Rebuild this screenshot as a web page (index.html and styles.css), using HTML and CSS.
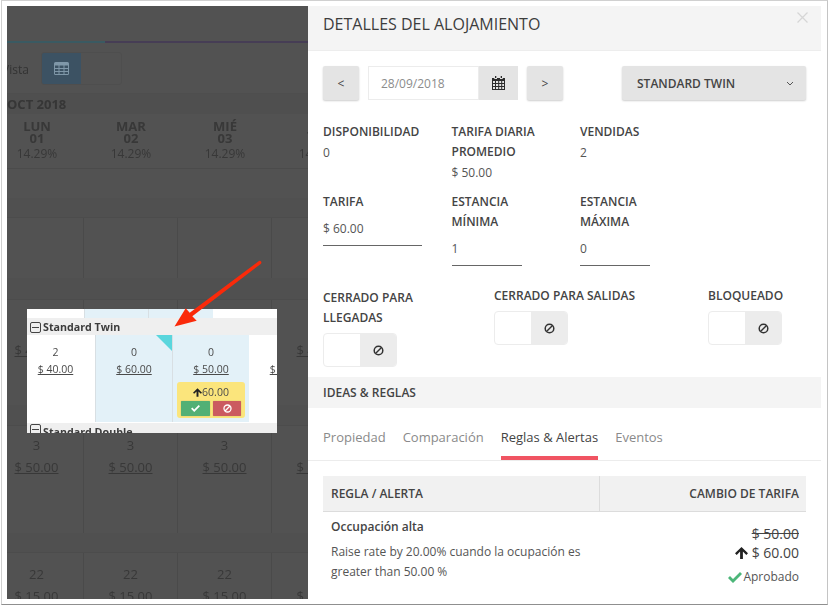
FILE: index.html
```html
<!DOCTYPE html>
<html lang="es">
<head>
<meta charset="utf-8">
<title>Detalles del alojamiento</title>
<link rel="stylesheet" href="styles.css">
</head>
<body>
<div class="frame">
  <div class="stage">
    <section class="calendar">
      <div class="cal-top"></div>
      <div class="cal-line"><i></i></div>
      <div class="cal-tools">
        <span class="vista">Vista</span>
        <div class="view-toggle">
          <span class="view-on">
            <svg width="15" height="13" viewBox="0 0 15 13"><path fill="#7f97a8" d="M1.5 0h12A1.5 1.5 0 0 1 15 1.500v10a1.500 1.500 0 0 1-1.500 1.500h-12A1.500 1.500 0 0 1 0 11.500v-10A1.500 1.500 0 0 1 1.500 0zM1 3.500V6h3.500V3.500zm4.500 0V6h4V3.500zm5 0V6H14V3.500zM1 7v2h3.500V7zm4.500 0v2h4V7zm5 0v2H14V7zM1 10v2h3.500v-2zm4.500 0v2h4v-2zm5 0v2H14v-2z"/></svg>
          </span>
          <span class="view-off"></span>
        </div>
      </div>
      <div class="cal-month">OCT 2018</div>
      <div class="cal-grid cal-head">
        <div class="day"><b>LUN<br>01</b><span>14.29%</span></div>
        <div class="day"><b>MAR<br>02</b><span>14.29%</span></div>
        <div class="day"><b>MIÉ<br>03</b><span>14.29%</span></div>
        <div class="day"><b>JUE<br>04</b><span>14.29%</span></div>
      </div>
      <div class="cal-spacer"></div>
      <div class="cal-band"></div>
      <div class="cal-grid cal-row-empty"><div class="cell"></div><div class="cell"></div><div class="cell"></div><div class="cell"></div></div>
      <div class="cal-band cal-band-tall"></div>
      <div class="cal-grid cal-row-twin">
        <div class="cell"><span>2</span><u>$ 40.00</u></div>
        <div class="cell"><span>2</span><u>$ 40.00</u></div>
        <div class="cell"><span>2</span><u>$ 40.00</u></div>
        <div class="cell"><span>2</span><u>$ 40.00</u></div>
      </div>
      <div class="cal-band cal-band-mid"></div>
      <div class="cal-grid cal-row-double">
        <div class="cell"><span>3</span><u>$ 50.00</u></div>
        <div class="cell"><span>3</span><u>$ 50.00</u></div>
        <div class="cell"><span>3</span><u>$ 50.00</u></div>
        <div class="cell"><span>3</span><u>$ 50.00</u></div>
      </div>
      <div class="cal-band"></div>
      <div class="cal-grid cal-row-last">
        <div class="cell"><span>22</span><u class="plain">$ 15.00</u></div>
        <div class="cell"><span>22</span><u class="plain">$ 15.00</u></div>
        <div class="cell"><span>22</span><u class="plain">$ 15.00</u></div>
        <div class="cell"><span>22</span><u class="plain">$ 15.00</u></div>
      </div>
    </section>

    <section class="panel">
      <header class="panel-head">
        <h1>DETALLES DEL ALOJAMIENTO</h1>
        <svg class="close" width="11" height="11" viewBox="0 0 11 11"><path d="M.5.500l10 10M10.500.500l-10 10" stroke="#d6d6d6" stroke-width="1.300" fill="none"/></svg>
      </header>
      <div class="panel-body">
        <div class="nav-row">
          <button class="btn btn-step">&lt;</button>
          <div class="date">
            <span class="date-value">28/09/2018</span>
            <span class="date-addon">
              <svg width="13" height="14" viewBox="0 0 13 14"><path fill="#2b2b2b" d="M3 0h1.300v2H3zM8.700 0H10v2H8.700zM0 2h2.300v1h2.700V2h3v1h2.700V2H13v12H0zm1 3v2h2V5zm3 0v2h2.200V5zm3.200 0v2h2V5zm3 0v2H12V5zM1 8v2h2V8zm3 0v2h2.200V8zm3.200 0v2h2V8zm3 0v2H12V8zM1 11v2h2v-2zm3 0v2h2.200v-2zm3.200 0v2h2v-2zm3 0v2H12v-2z"/></svg>
            </span>
          </div>
          <button class="btn btn-step">&gt;</button>
          <button class="btn btn-select">
            <span>STANDARD TWIN</span>
            <svg width="8" height="5" viewBox="0 0 8 5"><path d="M1 1l3 3 3-3" stroke="#555" stroke-width="1" fill="none"/></svg>
          </button>
        </div>

        <div class="stats">
          <div><h3>DISPONIBILIDAD</h3><p>0</p></div>
          <div><h3>TARIFA DIARIA PROMEDIO</h3><p>$ 50.00</p></div>
          <div><h3>VENDIDAS</h3><p>2</p></div>
        </div>

        <div class="inputs">
          <div class="input-wide"><h3>TARIFA</h3><div class="input-value">$ 60.00</div></div>
          <div class="input-narrow"><h3>ESTANCIA MÍNIMA</h3><div class="input-value">1</div></div>
          <div class="input-narrow"><h3>ESTANCIA MÁXIMA</h3><div class="input-value">0</div></div>
        </div>

        <div class="switches">
          <div class="switch-col switch-first">
            <h3>CERRADO PARA LLEGADAS</h3>
            <div class="switch"><span></span><span class="switch-off"><svg width="11" height="11" viewBox="0 0 11 11"><circle cx="5.500" cy="5.500" r="4.300" stroke="#333" stroke-width="1.500" fill="none"/><path d="M2.500 8.500l6-6" stroke="#333" stroke-width="1.500"/></svg></span></div>
          </div>
          <div class="switch-col switch-second">
            <h3>CERRADO PARA SALIDAS</h3>
            <div class="switch"><span></span><span class="switch-off"><svg width="11" height="11" viewBox="0 0 11 11"><circle cx="5.500" cy="5.500" r="4.300" stroke="#333" stroke-width="1.500" fill="none"/><path d="M2.500 8.500l6-6" stroke="#333" stroke-width="1.500"/></svg></span></div>
          </div>
          <div class="switch-col">
            <h3>BLOQUEADO</h3>
            <div class="switch"><span></span><span class="switch-off"><svg width="11" height="11" viewBox="0 0 11 11"><circle cx="5.500" cy="5.500" r="4.300" stroke="#333" stroke-width="1.500" fill="none"/><path d="M2.500 8.500l6-6" stroke="#333" stroke-width="1.500"/></svg></span></div>
          </div>
        </div>
      </div>

      <div class="band">IDEAS &amp; REGLAS</div>

      <nav class="tabs">
        <a>Propiedad</a>
        <a>Comparación</a>
        <a class="tab-on">Reglas &amp; Alertas</a>
        <a>Eventos</a>
      </nav>

      <div class="rules">
        <div class="rules-head">
          <div>REGLA / ALERTA</div>
          <div class="rules-head-r">CAMBIO DE TARIFA</div>
        </div>
        <div class="rules-row">
          <div class="rule-text">
            <h4>Occupación alta</h4>
            <p>Raise rate by 20.00% cuando la ocupación es greater than 50.00 %</p>
          </div>
          <div class="rule-rate">
            <s>$ 50.00</s>
            <div class="rate-new">
              <svg width="13" height="12" viewBox="0 0 13 12"><path fill="#222" d="M6.500 0L13 6.300l-1.700 1.600-3.400-3.300V12H5.100V4.600L1.700 7.900 0 6.300z"/></svg>
              <span>$ 60.00</span>
            </div>
            <div class="rate-ok">
              <svg width="14" height="11" viewBox="0 0 14 11"><path fill="#4cb679" d="M5 11L0 6l2-2 3 3 7-7 2 2z"/></svg>
              <span>Aprobado</span>
            </div>
          </div>
        </div>
      </div>
    </section>

    <aside class="clip">
      <div class="clip-top"><i></i><i class="clip-blue"></i><i class="clip-blue"></i><i></i></div>
      <div class="clip-group"><span class="minus"></span>Standard Twin</div>
      <div class="clip-row">
        <div class="clip-cell"><span>2</span><u>$ 40.00</u></div>
        <div class="clip-cell clip-blue"><span>0</span><u>$ 60.00</u><em class="flag"></em></div>
        <div class="clip-cell clip-blue"><span>0</span><u>$ 50.00</u>
          <div class="suggest">
            <div class="suggest-rate"><svg width="9" height="9" viewBox="0 0 13 12"><path fill="#222" d="M6.500 0L13 6.300l-1.700 1.600-3.400-3.300V12H5.100V4.600L1.700 7.900 0 6.300z"/></svg>60.00</div>
            <div class="suggest-btns">
              <span class="ok"><svg width="9" height="7" viewBox="0 0 14 11"><path fill="#fff" d="M5 11L0 6l2-2 3 3 7-7 2 2z"/></svg></span>
              <span class="no"><svg width="9" height="9" viewBox="0 0 11 11"><circle cx="5.500" cy="5.500" r="4.300" stroke="#fff" stroke-width="1.600" fill="none"/><path d="M2.500 8.500l6-6" stroke="#fff" stroke-width="1.600"/></svg></span>
            </div>
          </div>
        </div>
        <div class="clip-cell"><span>&nbsp;</span><u>$ 50.00</u></div>
      </div>
      <div class="clip-group clip-group-cut"><span class="minus"></span>Standard Double</div>
    </aside>

    <svg class="arrow" width="90" height="70" viewBox="0 0 90 70">
      <path fill="#fa2a0a" d="M.5 66.500L11.700 48.300 15.700 52.700 85 .9A1.800 1.800 0 0 1 87 3.700L18.300 56.300 22.700 60.700Z"/>
    </svg>
  </div>
</div>
</body>
</html>
```

FILE: styles.css
```css
* { box-sizing: border-box; }
html, body { margin: 0; padding: 0; background: #fff; }
body { font-family: "Open Sans", "Liberation Sans", sans-serif; font-size: 12px; color: #444; width: 829px; height: 607px; overflow: hidden; }
h1, h3, h4, p { margin: 0; }

.frame { margin-left: 1px; width: 827px; height: 605px; border: 1px solid #d0d0d0; border-bottom-color: #8f8f8f; border-right-color: #c4c4c4; padding: 5px 5px; background: #fff; }
.stage { position: relative; display: flex; width: 814px; height: 593px; }

/* dimmed calendar */
.calendar { width: 301px; height: 593px; overflow: hidden; background: #525252; color: #383838; flex: none; filter: blur(.35px); }
.cal-top { height: 35px; }
.cal-line { height: 2px; background: #463d55; }
.cal-line i { display: block; width: 98px; height: 2px; background: #3a5a62; }
.cal-tools { height: 51px; display: flex; align-items: flex-start; position: relative; border-bottom: 1px solid #4e4e4e; padding: 9px 0 0 34px; }
.vista { position: absolute; left: -5px; top: 17px; font-size: 12px; line-height: 20px; color: #333; }
.view-toggle { display: flex; width: 81px; height: 33px; border-radius: 3px; overflow: hidden; border: 1px solid #4e4e4e; }
.view-on { width: 40px; background: #3c5263; display: flex; align-items: center; justify-content: center; margin: -1px 0 -1px -1px; }
.view-off { flex: 1; }
.cal-month { height: 20px; line-height: 20px; background: #4f4f4f; font-weight: 700; font-size: 13px; color: #363636; }
.cal-grid { display: grid; grid-template-columns: repeat(4, 94px); margin-left: -17px; }
.cal-head { height: 55px; border-bottom: 1px solid #4b4b4b; background: #525252; }
.day { text-align: center; padding-top: 6px; }
.day b { display: block; font-size: 13px; line-height: 12px; font-weight: 700; }
.day span { display: block; font-size: 12px; line-height: 20px; }
.cal-spacer { height: 29px; }
.cal-band { height: 20px; background: #505050; border-bottom: 1px solid #4c4c4c; }
.cal-band-tall { height: 22px; }
.cal-band-mid { height: 21px; }
.cal-row-empty { height: 60px; }
.cal-row-twin { height: 105px; }
.cal-row-double { height: 107px; }
.cal-row-last { height: 46px; }
.cell { border-right: 1px solid #4a4a4a; text-align: center; font-size: 13px; line-height: 22px; padding-top: 8px; }
.cell span { display: block; }
.cell u { display: block; }
.cal-row-twin .cell { padding-top: 17px; }
.cal-row-last .cell { padding-top: 10px; }
.plain { text-decoration: none; }

/* drawer */
.panel { width: 513px; height: 593px; background: #fff; flex: none; overflow: hidden; }
.panel-head { position: relative; height: 45px; background: #f4f4f4; border-bottom: 1px solid #ededed; padding: 7px 15px 0; }
.panel-head h1 { font-size: 16px; line-height: 22px; font-weight: 400; color: #3d3d3d; }
.close { position: absolute; right: 13px; top: 6px; }
.panel-body { padding: 15px 15px 0; }
.nav-row { display: flex; height: 34px; }
.btn { border: 0; background: #e4e4e4; border-radius: 2px; box-shadow: 0 1px 2px rgba(0,0,0,.2); font: 400 12px "Open Sans", sans-serif; color: #444; padding: 0; }
.btn-step { width: 36px; height: 34px; }
.date { display: flex; width: 150px; height: 34px; margin: 0 9px; }
.date-value { width: 111px; border: 1px solid #ececec; padding-left: 12px; line-height: 33px; color: #8c8c8c; font-size: 12px; }
.date-addon { flex: 1; background: #e4e4e4; display: flex; align-items: center; justify-content: center; }
.btn-select { width: 184px; margin-left: auto; display: flex; align-items: center; justify-content: space-between; padding: 0 12px 0 15px; font-weight: 600; color: #444; }

.stats, .inputs { display: grid; grid-template-columns: 128.500px 128.500px 1fr; }
.stats { margin-top: 22px; }
h3 { font-size: 12px; line-height: 20px; font-weight: 600; color: #444; }
.stats h3 { width: 110px; }
.stats p { margin-top: 1px; line-height: 20px; color: #555; }
.inputs { margin-top: 9px; }
.inputs h3 { width: 80px; }
.input-value { margin-top: 7px; line-height: 20px; padding-bottom: 6px; border-bottom: 1px solid #666; color: #555; }
.input-wide .input-value { width: 99px; }
.input-narrow .input-value { width: 70px; }

.switches { display: flex; margin-top: 20px; align-items: flex-start; }
.switch-col h3 { margin-bottom: 5px; }
.switch-first { width: 171px; padding-top: 2px; }
.switch-first h3 { width: 110px; }
.switch-second { width: 214px; }
.switch { display: flex; width: 74px; height: 34px; border: 1px solid #ececec; border-radius: 4px; overflow: hidden; }
.switch span { flex: 1; }
.switch .switch-off { background: #ececec; display: flex; align-items: center; justify-content: center; }

.band { margin-top: 10px; height: 31px; background: #f4f4f4; padding: 6px 15px 0; line-height: 20px; font-weight: 600; color: #444; }
.tabs { display: flex; gap: 17px; padding: 0 15px; border-bottom: 1px solid #ececec; height: 53px; }
.tabs a { font-size: 13px; line-height: 20px; padding-top: 19px; color: #8a8a8a; height: 52px; }
.tabs .tab-on { color: #444; border-bottom: 4px solid #f05462; }

.rules { margin: 15px 15px 0; }
.rules-head { display: grid; grid-template-columns: 276px 1fr; height: 36px; background: #f1f1f1; border-bottom: 1px solid #dcdcdc; line-height: 35px; font-weight: 600; color: #444; }
.rules-head > div:first-child { padding-left: 8px; }
.rules-head-r { text-align: right; padding-right: 7px; border-left: 1px solid #dcdcdc; }
.rules-row { display: grid; grid-template-columns: 276px 1fr; }
.rule-text { padding: 5px 0 0 8px; }
.rule-text h4 { font-size: 12px; line-height: 20px; font-weight: 600; color: #444; }
.rule-text p { width: 262px; margin-top: 5px; line-height: 20px; color: #555; }
.rule-rate { text-align: right; padding: 12px 7px 0 0; color: #444; font-size: 14px; line-height: 20px; }
.rule-rate s { display: block; }
.rate-new { display: flex; justify-content: flex-end; align-items: center; gap: 4px; margin-top: -1px; }
.rate-ok { display: flex; justify-content: flex-end; align-items: center; gap: 1px; margin-top: 4px; font-size: 12px; color: #555; }

/* pasted clipping over the calendar */
.clip { position: absolute; left: 20px; top: 303px; width: 250px; height: 124px; background: #fff; overflow: hidden; color: #4a4a4a; filter: blur(.3px); }
.clip-top { display: flex; height: 9px; }
.clip-top i { display: block; width: 77px; }
.clip-top i:first-child { width: 68px; }
.clip-blue { background: #e3f1f8; }
.clip-top .clip-blue, .clip-cell.clip-blue { border-left: 1px solid #d8dfe3; }
.clip-group { height: 17px; background: #efefef; font-size: 10.700px; font-weight: 700; line-height: 17px; padding: 1px 0 0 3px; display: flex; align-items: center; gap: 2px; color: #3c3c3c; }
.clip-group-cut { height: 14px; margin-top: 1px; align-items: flex-start; }
.minus { width: 11px; height: 11px; border: 1px solid #444; border-radius: 2px; position: relative; flex: none; }
.minus::after { content: ""; position: absolute; left: 1px; right: 1px; top: 4px; height: 1px; background: #444; }
.clip-row { display: flex; height: 87px; margin-left: -11px; }
.clip-cell { position: relative; width: 77px; flex: none; text-align: center; font-size: 10.500px; line-height: 17px; padding-top: 9px; }
.clip-cell:first-child { width: 79px; }
.clip-cell span { display: block; }
.clip-cell u { display: block; }
.flag { position: absolute; right: 0; top: 0; border-style: solid; border-width: 0 16px 16px 0; border-color: transparent #5ad6dd transparent transparent; }
.suggest { position: absolute; left: 4px; top: 47px; width: 68px; height: 36px; background: #fbe57c; border-radius: 3px; padding: 2px 4px; }
.suggest-rate { display: flex; align-items: center; justify-content: center; line-height: 17px; font-size: 10.500px; }
.suggest-btns { display: flex; gap: 3px; }
.suggest-btns span { display: flex; align-items: center; justify-content: center; width: 29px; height: 15px; border-radius: 1px; box-shadow: 0 0 1px rgba(0,0,0,.4); }
.suggest-btns .ok { background: #52b075; }
.suggest-btns .no { background: #cb5a60; width: 28px; }

.arrow { position: absolute; left: 167px; top: 254px; }
```
